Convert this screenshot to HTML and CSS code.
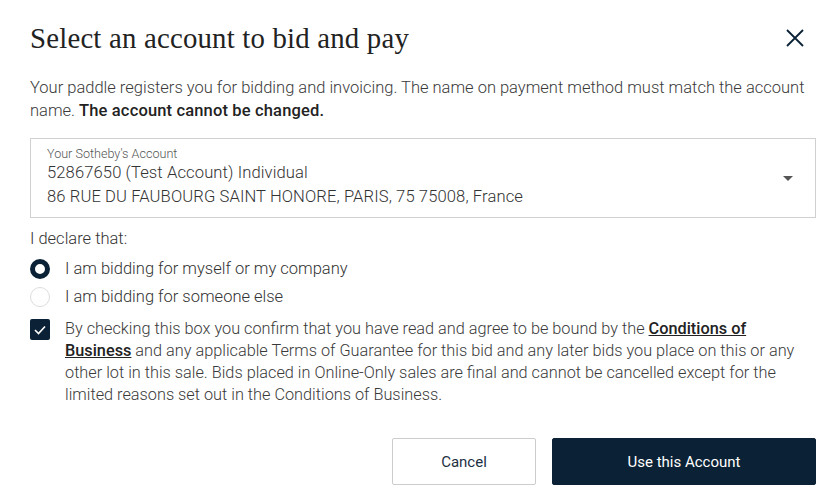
FILE: index.html
```html
<!DOCTYPE html>
<html>
<head>
<meta charset="utf-8">
<link rel="stylesheet" href="styles.css">
</head>
<body>
<div class="modal">
  <div class="header">
    <h1 class="title">Select an account to bid and pay</h1>
    <button class="close" aria-label="Close">
      <svg width="20" height="20" viewBox="0 0 20 20"><path d="M2 2 L18 18 M18 2 L2 18" stroke="#0b2236" stroke-width="1.8" fill="none"/></svg>
    </button>
  </div>
  <p class="intro">Your paddle registers you for bidding and invoicing. The name on payment method must match the account name. <strong>The account cannot be changed.</strong></p>
  <div class="select">
    <div class="select-text">
      <div class="select-label">Your Sotheby's Account</div>
      <div class="select-line">52867650 (Test Account) Individual</div>
      <div class="select-line">86 RUE DU FAUBOURG SAINT HONORE, PARIS, 75 75008, France</div>
    </div>
    <div class="caret"></div>
  </div>
  <div class="declare">I declare that:</div>
  <div class="radios">
    <label class="radio-row"><span class="radio checked"></span><span>I am bidding for myself or my company</span></label>
    <label class="radio-row"><span class="radio"></span><span>I am bidding for someone else</span></label>
  </div>
  <div class="check-row">
    <span class="checkbox">
      <svg width="12" height="10" viewBox="0 0 12 10"><path d="M1 5 L4.5 8.5 L11 1.5" stroke="#fff" stroke-width="1.6" fill="none"/></svg>
    </span>
    <p class="terms">By checking this box you confirm that you have read and agree to be bound by the <a href="#">Conditions of Business</a> and any applicable Terms of Guarantee for this bid and any later bids you place on this or any other lot in this sale. Bids placed in Online-Only sales are final and cannot be cancelled except for the limited reasons set out in the Conditions of Business.</p>
  </div>
  <div class="actions">
    <button class="btn btn-secondary">Cancel</button>
    <button class="btn btn-primary">Use this Account</button>
  </div>
</div>
</body>
</html>
```
FILE: styles.css
```css
* { box-sizing: border-box; }
html, body { margin: 0; padding: 0; background: #fff; }
body {
  font-family: Roboto, "Liberation Sans", sans-serif;
  color: #333;
}
.modal {
  width: 829px;
  padding: 18px 14px 0 30px;
}
.header {
  display: flex;
  justify-content: space-between;
  align-items: center;
  height: 40px;
}
.title {
  margin: 0;
  font-family: "Liberation Serif", serif;
  font-weight: normal;
  font-size: 28.8px;
  color: #222;
  letter-spacing: 0.2px;
}
.close {
  background: none;
  border: 0;
  padding: 0;
  width: 20px;
  height: 20px;
  margin-right: 10px;
  display: flex;
}
.intro {
  margin: 18px 0 0 0;
  font-size: 16.5px;
  line-height: 23px;
  width: 785px;
  color: #3a3a3a;
  font-weight: 300;
}
.intro strong { font-weight: 500; color: #222; letter-spacing: 0.15px; }
.select {
  margin-top: 16px;
  width: 786px;
  height: 80px;
  border: 1px solid #d0d0d0;
  display: flex;
  align-items: center;
  justify-content: space-between;
  padding: 0 22px 0 16px;
}
.select-label {
  font-size: 12.6px;
  color: #555;
  line-height: 14px;
  font-weight: 300;
}
.select-line {
  font-size: 16.6px;
  line-height: 24px;
  color: #333;
  font-weight: 300;
  letter-spacing: 0.1px;
}
.caret {
  width: 0; height: 0;
  border-left: 5px solid transparent;
  border-right: 5px solid transparent;
  border-top: 5px solid #555;
}
.declare {
  margin-top: 10px;
  font-size: 16.5px;
  line-height: 22px;
  font-weight: 300;
}
.radios {
  margin-top: 8px;
  display: flex;
  flex-direction: column;
  gap: 6px;
}
.radio-row {
  display: flex;
  align-items: center;
  gap: 15px;
  font-size: 16.5px;
  line-height: 22px;
  font-weight: 300;
}
.radio {
  width: 20px; height: 20px;
  border-radius: 50%;
  border: 1px solid #ddd;
  background: #fff;
}
.radio.checked { border: 5px solid #0b2236; }
.check-row {
  margin-top: 10px;
  display: flex;
  gap: 15px;
  align-items: flex-start;
}
.checkbox {
  flex: none;
  width: 20px; height: 21px;
  background: #0b2236;
  border-radius: 2px;
  display: flex;
  align-items: center;
  justify-content: center;
  margin-top: 1px;
}
.terms {
  margin: 0;
  width: 745px;
  font-size: 16.3px;
  line-height: 22px;
  font-weight: 300;
  color: #3a3a3a;
}
.terms a { color: #222; font-weight: 500; text-decoration: underline; }
.actions {
  margin-top: 32px;
  display: flex;
  justify-content: flex-end;
  gap: 16px;
  width: 786px;
}
.btn {
  height: 47px;
  font-family: Roboto, "Liberation Sans", sans-serif;
  font-size: 15px;
  border-radius: 2px;
  cursor: pointer;
}
.btn-secondary {
  width: 144px;
  background: #fff;
  border: 1px solid #ccc;
  color: #1c2f42;
}
.btn-primary {
  width: 264px;
  background: #0b2236;
  border: 1px solid #0b2236;
  color: #fff;
}
```
